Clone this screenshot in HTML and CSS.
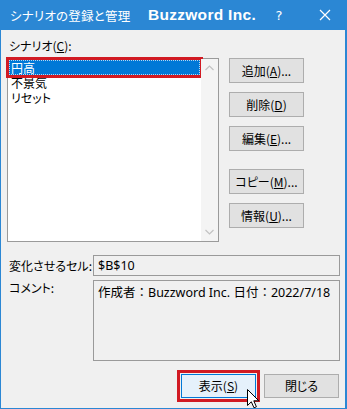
FILE: index.html
```html
<!DOCTYPE html>
<html lang="ja">
<head>
<meta charset="utf-8">
<title>シナリオの登録と管理</title>
<link rel="stylesheet" href="styles.css">
</head>
<body>
<div class="window">
  <div class="titlebar">
    <div class="title">シナリオの登録と管理</div>
    <div class="brand">Buzzword Inc.</div>
    <div class="tbtn help">?</div>
    <div class="tbtn close">
      <svg width="12" height="12" viewBox="0 0 12 12"><path d="M1 1 L11 11 M11 1 L1 11" stroke="#fff" stroke-width="1.2" fill="none"/></svg>
    </div>
  </div>
  <div class="body">
    <div class="label lbl-scn">シナリオ(<u>C</u>):</div>
    <div class="top">
      <div class="listbox">
        <div class="items">
          <div class="item selected">円高</div>
          <div class="item">不景気</div>
          <div class="item">リセット</div>
        </div>
        <div class="scrollbar">
          <svg class="arrow" width="9" height="6" viewBox="0 0 9 6"><path d="M0.5 5 L4.5 1 L8.5 5" stroke="#c2c2c2" stroke-width="1.2" fill="none"/></svg>
          <svg class="arrow" width="9" height="6" viewBox="0 0 9 6"><path d="M0.5 1 L4.5 5 L8.5 1" stroke="#c2c2c2" stroke-width="1.2" fill="none"/></svg>
        </div>
      </div>
      <div class="sidebtns">
        <div class="btn">追加(<u>A</u>)...</div>
        <div class="btn">削除(<u>D</u>)</div>
        <div class="btn">編集(<u>E</u>)...</div>
        <div class="btn sep">コピー(<u>M</u>)...</div>
        <div class="btn">情報(<u>U</u>)...</div>
      </div>
    </div>
    <div class="row cells">
      <div class="label rlabel">変化させるセル:</div>
      <div class="field">$B$10</div>
    </div>
    <div class="row comment">
      <div class="label rlabel">コメント:</div>
      <div class="field memo">作成者：Buzzword Inc. 日付：2022/7/18</div>
    </div>
    <div class="footer">
      <div class="btn fbtn focused">表示(<u>S</u>)</div>
      <div class="btn fbtn">閉じる</div>
    </div>
  </div>
  <svg class="cursor" width="13" height="20" viewBox="0 0 13 20"><path d="M0.5 0.5 L0.5 16.5 L4.3 12.8 L7 18.8 L9.4 17.8 L6.8 11.8 L11.8 11.8 Z" fill="#fff" stroke="#000" stroke-width="1" stroke-linejoin="miter"/></svg>
</div>
</body>
</html>
```

FILE: styles.css
```css
* { box-sizing: border-box; }
html, body { margin: 0; padding: 0; }
body {
  font-family: "Noto Sans CJK JP", "Noto Sans", sans-serif;
  font-size: 12px;
  color: #000;
  background: #f0f0f0;
}
.window {
  position: relative;
  width: 347px;
  height: 409px;
  background: #f0f0f0;
  border-left: 1px solid #2b87d4;
  border-right: 2px solid #2b87d4;
  border-bottom: 1px solid #2b87d4;
  display: flex;
  flex-direction: column;
  overflow: hidden;
}
.titlebar {
  height: 30px;
  flex: none;
  background: #2b87d4;
  color: #fff;
  display: flex;
  align-items: center;
  margin: 0 -2px 0 -1px;
  padding-left: 10px;
}
.title {
  flex: 1;
  font-size: 12.5px;
  font-feature-settings: "palt";
  letter-spacing: 0.2px;
}
.brand {
  font-family: "Liberation Sans", Arial, sans-serif;
  font-weight: bold;
  font-size: 15.5px;
  letter-spacing: 0.3px;
}
.tbtn {
  width: 46px;
  height: 30px;
  display: flex;
  align-items: center;
  justify-content: center;
}
.help {
  font-family: "DejaVu Sans", sans-serif;
  font-size: 13px;
}
.close { width: 45px; }
.body {
  flex: 1;
  display: flex;
  flex-direction: column;
  padding: 8px 5px 0 6px;
}
.label {
  font-feature-settings: "palt";
  line-height: 16px;
  height: 16px;
}
.lbl-scn { margin: 0 0 4px 2px; }
.top {
  display: grid;
  grid-template-columns: 212px 75px;
  column-gap: 10px;
}
.listbox {
  height: 184px;
  border: 1px solid #9a9a9a;
  background: #fff;
  display: flex;
}
.items {
  flex: 1;
  padding: 1px 1px 0 1px;
}
.item {
  height: 15px;
  line-height: 15px;
  padding-left: 2px;
  font-feature-settings: "palt";
}
.item.selected {
  background: #0078d7;
  color: #fff;
  line-height: 13px;
  border: 1px dotted rgba(255,255,255,0.7);
  padding-left: 1px;
  outline: 3px solid #d11a22;
  outline-offset: 0;
}
.scrollbar {
  width: 17px;
  background: #f4f4f4;
  display: flex;
  flex-direction: column;
  justify-content: space-between;
  align-items: center;
  padding: 6px 0 6px 0;
}
.sidebtns {
  display: flex;
  flex-direction: column;
  gap: 9px;
}
.btn {
  height: 25px;
  border: 1px solid #adadad;
  background: #e1e1e1;
  display: flex;
  align-items: center;
  justify-content: center;
  font-feature-settings: "palt";
  line-height: 16px;
}
.btn.sep { margin-top: 9px; }
.btn u { text-underline-offset: 1px; }
.row {
  display: flex;
}
.rlabel {
  width: 86px;
  padding-left: 2px;
}
.cells {
  margin-top: 13px;
  align-items: center;
}
.field {
  flex: 1;
  border: 1px solid #9a9a9a;
  background: #f0f0f0;
  padding-left: 4px;
  font-family: "Noto Sans", "Noto Sans CJK JP", sans-serif;
  font-size: 12.5px;
}
.cells .field {
  height: 21px;
  line-height: 19px;
}
.comment {
  margin-top: 4px;
}
.memo {
  height: 81px;
  padding-top: 3px;
  line-height: 18px;
  font-family: "Noto Sans", "Noto Sans CJK JP", sans-serif;
  font-size: 12.5px;
}
.footer {
  margin-top: 13px;
  display: flex;
  justify-content: flex-end;
  gap: 8px;
  padding-right: 1px;
}
.fbtn {
  width: 75px;
  height: 24px;
}
.fbtn.focused {
  background: #e5f1fb;
  border-color: #0078d7;
  outline: 3px solid #d11a22;
  outline-offset: 1px;
}
.cursor {
  position: absolute;
  left: 246px;
  top: 389px;
}
```
